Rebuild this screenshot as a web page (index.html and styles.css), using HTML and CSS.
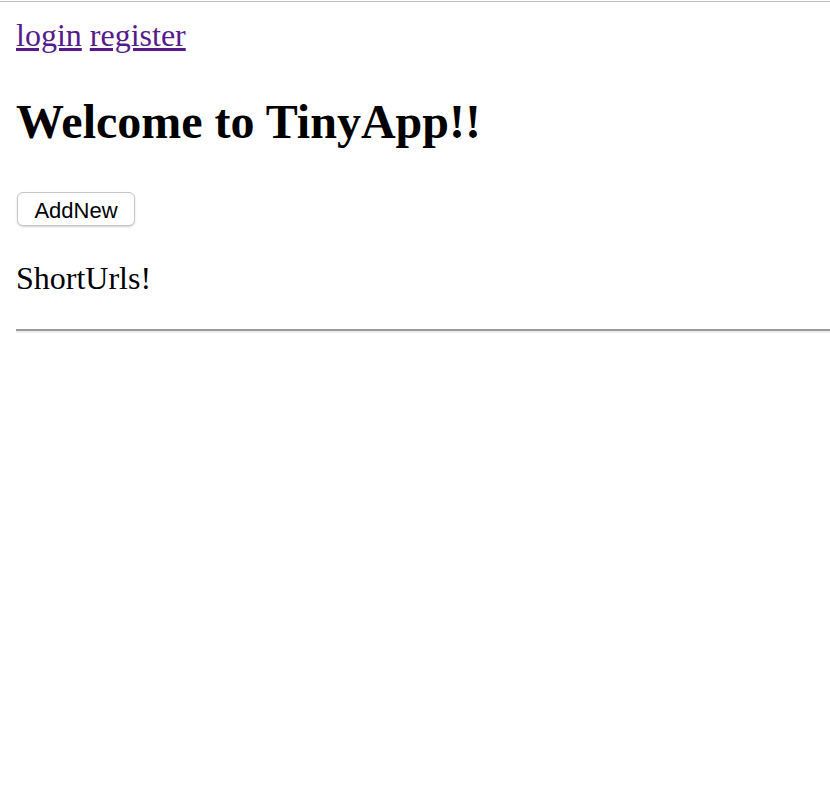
FILE: index.html
```html
<!DOCTYPE html>
<html>
<head>
<meta charset="utf-8">
<title>TinyApp</title>
<link rel="stylesheet" href="styles.css">
</head>
<body>
<div class="chrome"></div>
<main class="page">
  <nav class="nav"><a href="#">login</a> <a href="#">register</a></nav>
  <h2 class="title">Welcome to TinyApp!!</h2>
  <form class="add-form"><button type="button" class="btn">AddNew</button></form>
  <p class="label">ShortUrls!</p>
  <hr class="rule">
</main>
</body>
</html>
```
FILE: styles.css
```css
html, body {
  margin: 0;
  padding: 0;
  background: #fff;
}
body {
  font-family: "Liberation Serif", "Times New Roman", serif;
  font-size: 32px;
  color: #000;
  overflow: hidden;
}
.chrome {
  height: 1px;
  margin-top: 1px;
  background: #bdbdbd;
}
.page {
  padding: 15px 0 0 16px;
}
.nav {
  line-height: 37px;
}
.nav a {
  color: #551a8b;
  text-decoration: underline;
}
.title {
  font-size: 48px;
  font-weight: bold;
  line-height: 55px;
  margin: 40px 0 40px 0;
}
.add-form {
  margin: 0 0 34px 0;
  height: 37px;
  display: flex;
  align-items: flex-start;
  padding-top: 3px;
  box-sizing: border-box;
}
.btn {
  font-family: "Liberation Sans", Arial, sans-serif;
  font-size: 22px;
  color: #000;
  background: #fff;
  border: 1px solid #c6c6c6;
  border-radius: 6px;
  box-shadow: 0 1px 2px rgba(0,0,0,0.18);
  height: 34px;
  width: 118px;
  padding: 3px 0 0 0;
  margin-left: 1px;
  line-height: 29px;
  box-sizing: border-box;
}
.label {
  margin: 0 0 32px 0;
  line-height: 37px;
}
.rule {
  margin: 0;
  height: 0;
  border: 0;
  border-top: 2px solid #9a9a9a;
  border-bottom: 2px solid #ededed;
}
```
